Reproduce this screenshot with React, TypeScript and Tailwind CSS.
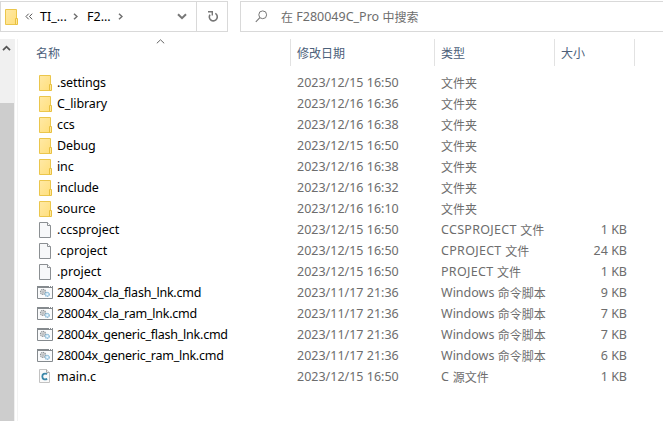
import React from "react";

type Kind = "folder" | "file" | "cmd" | "c";
type Row = { name: string; date: string; latin: string; cjk: string; size: string; kind: Kind };

const folder = (name: string, date: string): Row => ({ name, date, latin: "", cjk: "文件夹", size: "", kind: "folder" });

const rows: Row[] = [
  folder(".settings", "2023/12/15 16:50"),
  folder("C_library", "2023/12/16 16:36"),
  folder("ccs", "2023/12/16 16:38"),
  folder("Debug", "2023/12/15 16:50"),
  folder("inc", "2023/12/16 16:38"),
  folder("include", "2023/12/16 16:32"),
  folder("source", "2023/12/16 16:10"),
  { name: ".ccsproject", date: "2023/12/15 16:50", latin: "CCSPROJECT ", cjk: "文件", size: "1 KB", kind: "file" },
  { name: ".cproject", date: "2023/12/15 16:50", latin: "CPROJECT ", cjk: "文件", size: "24 KB", kind: "file" },
  { name: ".project", date: "2023/12/15 16:50", latin: "PROJECT ", cjk: "文件", size: "1 KB", kind: "file" },
  { name: "28004x_cla_flash_lnk.cmd", date: "2023/11/17 21:36", latin: "Windows ", cjk: "命令脚本", size: "9 KB", kind: "cmd" },
  { name: "28004x_cla_ram_lnk.cmd", date: "2023/11/17 21:36", latin: "Windows ", cjk: "命令脚本", size: "7 KB", kind: "cmd" },
  { name: "28004x_generic_flash_lnk.cmd", date: "2023/11/17 21:36", latin: "Windows ", cjk: "命令脚本", size: "7 KB", kind: "cmd" },
  { name: "28004x_generic_ram_lnk.cmd", date: "2023/11/17 21:36", latin: "Windows ", cjk: "命令脚本", size: "6 KB", kind: "cmd" },
  { name: "main.c", date: "2023/12/15 16:50", latin: "C ", cjk: "源文件", size: "1 KB", kind: "c" },
];

const nameTracking: Record<Kind, string> = {
  folder: "tracking-[-0.12px]",
  file: "tracking-normal",
  cmd: "tracking-[-0.24px]",
  c: "tracking-normal",
};

const typeTracking: Record<Kind, string> = {
  folder: "tracking-normal",
  file: "tracking-[0.3px]",
  cmd: "tracking-normal",
  c: "tracking-[0.3px]",
};

function FolderIcon() {
  return (
    <svg width="16" height="16" viewBox="0 0 16 16" className="shrink-0">
      <defs>
        <linearGradient id="folderFill" x1="0" y1="0" x2="1" y2="1">
          <stop offset="0" stopColor="#ffe9a6" />
          <stop offset="1" stopColor="#ffdf7c" />
        </linearGradient>
      </defs>
      <path d="M2.5.5h11v15h-11z" fill="url(#folderFill)" stroke="#ebc64c" />
      <path d="M12.5 9.5h2v6h-2z" fill="#ffe79a" stroke="#e8c040" />
    </svg>
  );
}

function FileIcon({ kind }: { kind: Kind }) {
  if (kind === "folder") return <FolderIcon />;
  if (kind === "cmd")
    return (
      <svg width="16" height="16" viewBox="0 0 16 16" className="shrink-0">
        <path d="M.5 1.5h15v12H.5z" fill="#fafbfc" stroke="#858a8e" />
        <path d="M0 1h16v2H0z" fill="#858a8e" />
        <path d="M12 1h1v1h-1zM14 1h1v1h-1z" fill="#fff" />
        <circle cx="6" cy="6.9" r="2.5" fill="#dfe1e3" stroke="#8c9196" strokeWidth="1.2" strokeDasharray="1.3 .6" />
        <circle cx="6" cy="6.9" r=".9" fill="#fff" stroke="#8c9196" strokeWidth=".6" />
        <circle cx="10.2" cy="9.3" r="2.1" fill="#c9e4f5" stroke="#85b5d2" strokeWidth="1.1" strokeDasharray="1.3 .5" />
        <circle cx="10.2" cy="9.3" r=".7" fill="#fff" />
      </svg>
    );
  if (kind === "c")
    return (
      <svg width="16" height="16" viewBox="0 0 16 16" className="shrink-0">
        <path d="M2.5.5h7l3 3v10h-10z" fill="#fafafa" stroke="#c2c2c2" />
        <path d="M9.5.5v3h3" fill="#eee" stroke="#aaa" />
        <path d="M10.2 5C7.4 3.9 5.3 5 5.3 7.5s2.2 3.6 4.9 2.4" fill="none" stroke="#3c87a8" strokeWidth="1.8" />
      </svg>
    );
  return (
    <svg width="16" height="16" viewBox="0 0 16 16" className="shrink-0">
      <path d="M2.5.5h8l3 3v12h-11z" fill="#f7f8f9" stroke="#8b8f92" />
      <path d="M10.5.5v3h3" fill="#fff" stroke="#8b8f92" />
    </svg>
  );
}

function Chevron() {
  return (
    <svg width="5" height="7" viewBox="0 0 5 7" className="shrink-0">
      <path d="M1 .7l3 2.8-3 2.8" fill="none" stroke="#707070" strokeWidth="1.5" />
    </svg>
  );
}

const cjk = "font-['Noto_Sans_CJK_SC',sans-serif] text-[12px] tracking-normal";

export default function App() {
  return (
    <div className="flex h-[421px] w-[663px] flex-col overflow-hidden bg-white font-['Noto_Sans','Noto_Sans_CJK_SC',sans-serif] text-[12.5px] leading-[21px] text-[#6d6d6d]">
      <div className="flex h-[39px] shrink-0 pt-px">
        <div className="flex h-[31px] w-[228px] items-center border border-[#d9d9d9] pl-[2px] text-black">
          <FolderIcon />
          <svg width="8" height="7" viewBox="0 0 8 7" className="ml-[6px] shrink-0">
            <path d="M3.7.7L1 3.5l2.7 2.8M7.2.7L4.5 3.5l2.7 2.8" fill="none" stroke="#555" strokeWidth="1" />
          </svg>
          <span className="ml-[7px] w-[33px] shrink-0 whitespace-nowrap">TI_...</span>
          <Chevron />
          <span className="ml-[9px] w-[31px] shrink-0 whitespace-nowrap">F2...</span>
          <Chevron />
          <svg width="10" height="7" viewBox="0 0 10 7" className="ml-[54px] shrink-0">
            <path d="M1 1.2l4 4 4-4" fill="none" stroke="#777" strokeWidth="2" />
          </svg>
          <div className="ml-[9px] flex h-full flex-1 items-center border-l border-[#d9d9d9] pl-[11px]">
            <svg width="11" height="11" viewBox="0 0 11 11">
              <path d="M2 3.6A4 4 0 1 0 7.3 2.4" fill="none" stroke="#777" strokeWidth="1.6" />
              <path d="M0 .7h4.3v3.8" fill="none" stroke="#777" strokeWidth="1.4" />
            </svg>
          </div>
        </div>
        <div className="ml-[12px] flex h-[31px] flex-1 items-center border border-r-0 border-[#d9d9d9] pl-[14px]">
          <svg width="13" height="13" viewBox="0 0 13 13" className="shrink-0">
            <circle cx="7.7" cy="4.8" r="3.9" fill="none" stroke="#777" />
            <path d="M4.9 7.6L.8 11.8" stroke="#777" strokeWidth="1.1" />
          </svg>
          <span className="ml-[13px] flex whitespace-pre">
            <span className={cjk}>在</span> F280049C_Pro <span className={cjk}>中搜索</span>
          </span>
        </div>
      </div>

      <div className="flex min-h-0 flex-1">
        <div className="w-[15px] shrink-0 bg-[#f0f0f0]">
          <div className="flex h-[64px] justify-center pt-[6px] pr-[2px]">
            <svg width="9" height="7" viewBox="0 0 9 7">
              <path d="M1 5.2l3.5-3.5L8 5.2" fill="none" stroke="#555" strokeWidth="1.8" />
            </svg>
          </div>
          <div className="h-full w-[14px] bg-[#cdcdcd]" />
        </div>
        <div className="ml-[2px] w-px shrink-0 bg-[#f3f3f3]" />
        <div className="flex min-w-0 flex-1 flex-col">
          <div className="flex h-[27px] shrink-0 text-[#4c607a]">
            <div className="flex w-[273px] justify-between border-r border-[#e2e2e2] pl-[18px]">
              <span className={`${cjk} mt-[3px]`}>名称</span>
              <svg width="9" height="5" viewBox="0 0 9 5" className="mr-[125px]">
                <path d="M.8 4.3L4.5.8l3.7 3.5" fill="none" stroke="#666" />
              </svg>
            </div>
            <div className={`${cjk} w-[144px] border-r border-[#e2e2e2] pt-[3px] pl-[6px]`}>修改日期</div>
            <div className={`${cjk} w-[120px] border-r border-[#e2e2e2] pt-[3px] pl-[6px]`}>类型</div>
            <div className={`${cjk} w-[80px] border-r border-[#e2e2e2] pt-[3px] pl-[6px]`}>大小</div>
          </div>
          <div className="flex flex-col pt-[6px]">
            {rows.map((row) => (
              <div key={row.name} className="flex h-[21px] items-center whitespace-pre">
                <div className="flex w-[279px] shrink-0 items-center pl-[19px] text-black">
                  <FileIcon kind={row.kind} />
                  <span className={`ml-[4px] ${nameTracking[row.kind]}`}>{row.name}</span>
                </div>
                <span className="w-[144px] shrink-0">{row.date}</span>
                <span className={`flex w-[120px] shrink-0 ${typeTracking[row.kind]}`}>
                  {row.latin}
                  <span className={cjk}>{row.cjk}</span>
                </span>
                <span className="w-[66px] shrink-0 text-right">{row.size}</span>
              </div>
            ))}
          </div>
        </div>
      </div>
    </div>
  );
}
